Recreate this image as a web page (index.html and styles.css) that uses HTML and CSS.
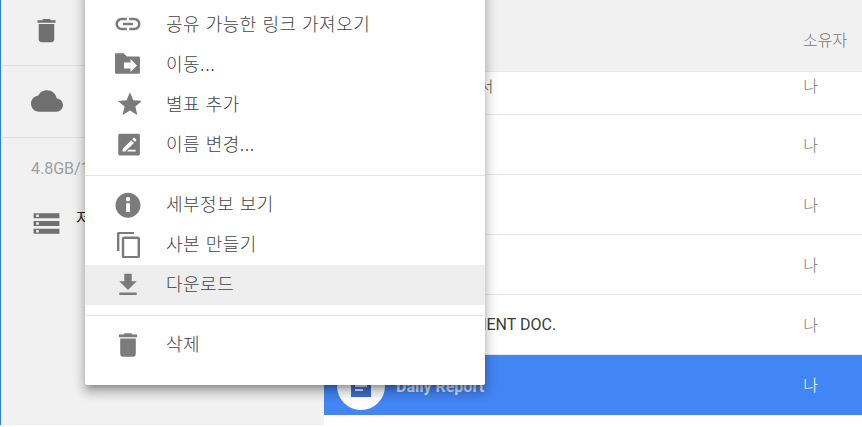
FILE: index.html
```html
<!DOCTYPE html>
<html lang="ko">
<head>
<meta charset="utf-8">
<title>Drive</title>
<link rel="stylesheet" href="styles.css">
</head>
<body>
<div class="app">
  <aside class="sidebar">
    <div class="side-row side-trash">
      <svg class="side-icon" viewBox="0 0 24 24"><path d="M6 19c0 1.100.9 2 2 2h8c1.100 0 2-.9 2-2V7H6v12zM19 4h-3.500l-1-1h-5l-1 1H5v2h14V4z"/></svg>
    </div>
    <div class="side-row side-cloud">
      <svg class="side-icon cloud" viewBox="0 0 24 24"><path d="M19.350 10.040C18.670 6.590 15.640 4 12 4 9.110 4 6.600 5.640 5.350 8.040 2.340 8.360 0 10.910 0 14c0 3.310 2.690 6 6 6h13c2.760 0 5-2.240 5-5 0-2.640-2.050-4.780-4.650-4.960z"/></svg>
    </div>
    <div class="quota">4.8GB/15.0GB</div>
    <div class="storage">
      <svg class="side-icon" viewBox="0 0 24 24"><path d="M2 20h20v-4H2v4zm2-3h2v2H4v-2zM2 4v4h20V4H2zm4 3H4V5h2v2zm-4 7h20v-4H2v4zm2-3h2v2H4v-2z"/></svg>
      <span class="storage-label">저장용량</span>
    </div>
  </aside>
  <main class="main">
    <header class="list-head"><span class="owner-head">소유자</span></header>
    <div class="row row-first"><span class="name">회의록 문서</span><span class="owner">나</span></div>
    <div class="row"><span class="name">문서</span><span class="owner">나</span></div>
    <div class="row"><span class="name">문서</span><span class="owner">나</span></div>
    <div class="row"><span class="name">문서</span><span class="owner">나</span></div>
    <div class="row"><span class="name doc">STATEMENT DOC.</span><span class="owner">나</span></div>
    <div class="row row-selected">
      <span class="file-badge"><svg viewBox="0 0 24 24"><path fill="#3f6fd0" d="M2 1h20v22H2z"/><path fill="#dfe7f7" d="M6 7h12v2H6zM6 11h12v2H6zM6 15h8v2H6z"/></svg></span>
      <span class="name name-selected">Daily Report</span>
      <span class="owner owner-selected">나</span>
    </div>
  </main>
  <nav class="menu">
    <div class="menu-item"><svg class="menu-icon" viewBox="0 0 24 24"><path d="M3.900 12c0-1.710 1.390-3.100 3.100-3.100h4V7H7c-2.760 0-5 2.240-5 5s2.240 5 5 5h4v-1.900H7c-1.710 0-3.100-1.390-3.100-3.100zM8 13h8v-2H8v2zm9-6h-4v1.900h4c1.710 0 3.100 1.390 3.100 3.100s-1.390 3.100-3.100 3.100h-4V17h4c2.760 0 5-2.240 5-5s-2.240-5-5-5z" transform="translate(12 12) scale(1.150) translate(-12 -12)"/></svg><span>공유 가능한 링크 가져오기</span></div>
    <div class="menu-item"><svg class="menu-icon" viewBox="0 0 24 24"><path fill-rule="evenodd" d="M0 2h8l3 3h11a1 1 0 0 1 1 1v14a1 1 0 0 1-1 1H1a1 1 0 0 1-1-1zM8.300 10.600h6V7.400l6 6-6 6v-3.200h-6z"/></svg><span>이동...</span></div>
    <div class="menu-item"><svg class="menu-icon" viewBox="0 0 24 24"><path d="M12 17.270L18.180 21l-1.640-7.030L22 9.240l-7.190-.61L12 2 9.190 8.630 2 9.240l5.460 4.730L5.820 21z" transform="translate(13.800 12.200) scale(1.100) translate(-12 -12)"/></svg><span>별표 추가</span></div>
    <div class="menu-item"><svg class="menu-icon" viewBox="0 0 24 24"><path fill-rule="evenodd" d="M4.500 2.500h17a1.500 1.500 0 0 1 1.500 1.500v17a1.500 1.500 0 0 1-1.500 1.500h-17A1.500 1.500 0 0 1 3 21V4a1.500 1.500 0 0 1 1.500-1.500zM7 16.500V19h2.500l8-8L15 8.500zM16 7.500L18.500 10l1-1a.8.800 0 0 0 0-1.100l-1.400-1.400a.8.800 0 0 0-1.100 0zM11 19h8v-1.800h-6.200z"/></svg><span>이름 변경...</span></div>
    <hr class="menu-rule menu-rule-first">
    <div class="menu-item menu-item-low"><svg class="menu-icon" viewBox="0 0 24 24"><path d="M12 0C5.400 0 0 5.400 0 12s5.400 12 12 12 12-5.400 12-12S18.600 0 12 0zm1.800 18.500h-3.600v-8.500h3.600v8.500zM12 8.300a2.100 2.100 0 1 1 0-4.200 2.100 2.100 0 0 1 0 4.200z" transform="translate(12 12.300) scale(.96) translate(-12 -12)"/></svg><span>세부정보 보기</span></div>
    <div class="menu-item menu-item-low"><svg class="menu-icon" viewBox="0 0 24 24"><path d="M16 1H4c-1.100 0-2 .9-2 2v14h2V3h12V1zm3 4H8c-1.100 0-2 .9-2 2v14c0 1.100.9 2 2 2h11c1.100 0 2-.9 2-2V7c0-1.100-.9-2-2-2zm0 16H8V7h11v14z" transform="translate(13 12) scale(1.120) translate(-12 -12)"/></svg><span>사본 만들기</span></div>
    <div class="menu-item menu-item-low menu-item-active"><svg class="menu-icon" viewBox="0 0 24 24"><path d="M19 9h-4V3H9v6H5l7 7 7-7zM5 18v2h14v-2H5z" transform="translate(12 12) scale(1.150) translate(-12 -12)"/></svg><span>다운로드</span></div>
    <hr class="menu-rule">
    <div class="menu-item menu-item-low"><svg class="menu-icon" viewBox="0 0 24 24"><path d="M6 19c0 1.100.9 2 2 2h8c1.100 0 2-.9 2-2V7H6v12zM19 4h-3.500l-1-1h-5l-1 1H5v2h14V4z" transform="translate(12 12) scale(1.200) translate(-12 -12)"/></svg><span>삭제</span></div>
  </nav>
</div>
</body>
</html>
```
FILE: styles.css
```css
* { box-sizing: border-box; }
html, body { margin: 0; padding: 0; height: 100%; overflow: hidden; background: #fff; }
body { font-family: "Noto Sans CJK KR", "Noto Sans", sans-serif; }
.app { position: relative; display: flex; width: 862px; height: 427px; overflow: hidden; }

.sidebar { width: 324px; height: 425px; flex: none; background: #f1f1f1; border-left: 1px solid #2f80d0; padding-left: 1px; }
.side-row { display: flex; align-items: center; padding-left: 29px; border-bottom: 1px solid #dedede; }
.side-trash { margin-top: -5px; height: 71px; }
.side-cloud { height: 72px; padding-bottom: 2px; }
.side-icon { width: 31px; height: 31px; fill: #6f6f6f; flex: none; }
.side-icon.cloud { width: 32px; height: 32px; }
.quota { margin: 21px 0 0 29px; height: 20px; font-family: Roboto, sans-serif; font-size: 16px; line-height: 20px; color: #9e9e9e; white-space: nowrap; }
.storage { display: flex; align-items: flex-start; margin: 29px 0 0 29px; }
.storage-label { margin-left: 14px; font-size: 16px; line-height: 18px; color: #222; }

.main { flex: 1; min-width: 0; display: flex; flex-direction: column; }
.list-head { height: 72px; flex: none; background: #f1f1f1; border-bottom: 1px solid #e6e6e6; display: flex; justify-content: flex-end; align-items: flex-end; padding: 0 24px 22px 0; }
.owner-head { width: 35px; font-size: 16px; font-weight: 300; line-height: 20px; color: #777; white-space: nowrap; }
.row { height: 60px; flex: none; background: #fff; border-bottom: 1px solid #e8e8e8; display: flex; align-items: center; justify-content: space-between; padding: 0 44px 0 96px; }
.row-first { height: 43px; align-items: flex-start; padding-top: 3px; }
.name { font-size: 15px; font-weight: 300; color: #444; white-space: nowrap; }
.doc { font-family: Roboto, sans-serif; font-weight: 400; font-size: 16px; margin-left: 6px; color: #3c3c3c; }
.owner { font-size: 16px; font-weight: 300; color: #777; line-height: 20px; margin-bottom: 2px; }
.row-selected { background: #4285f4; border-bottom: 0; padding-left: 13px; justify-content: flex-start; }
.file-badge { width: 48px; height: 48px; border-radius: 50%; background: #fff; flex: none; display: flex; align-items: center; justify-content: center; margin-top: 2px; }
.file-badge svg { width: 24px; height: 24px; }
.name-selected { margin: 3px 0 0 11px; font-family: Roboto, sans-serif; font-weight: 700; font-size: 16px; color: #dbe6fb; }
.owner-selected { margin-left: auto; color: #fff; }

.menu { position: absolute; left: 85px; top: -16px; width: 400px; padding: 20px 0; background: #fff; border-radius: 2px; box-shadow: 0 8px 10px 1px rgba(0,0,0,.16), 0 3px 14px 2px rgba(0,0,0,.14), 0 5px 5px -3px rgba(0,0,0,.24); }
.menu-item { height: 40px; display: flex; align-items: center; padding-left: 30px; font-size: 18px; font-weight: 300; letter-spacing: .5px; color: #444; white-space: nowrap; }
.menu-item span { margin-bottom: 2px; }
.menu-item-low span { margin-bottom: 4px; }
.menu-item-active { background: #eeeeee; }
.menu-icon { width: 26px; height: 26px; fill: #7b7b7b; flex: none; margin-right: 25px; }
.menu-rule { height: 1px; margin: 10px 0 9px; border: 0; background: #e6e6e6; }
.menu-rule-first { margin-top: 11px; }
```
